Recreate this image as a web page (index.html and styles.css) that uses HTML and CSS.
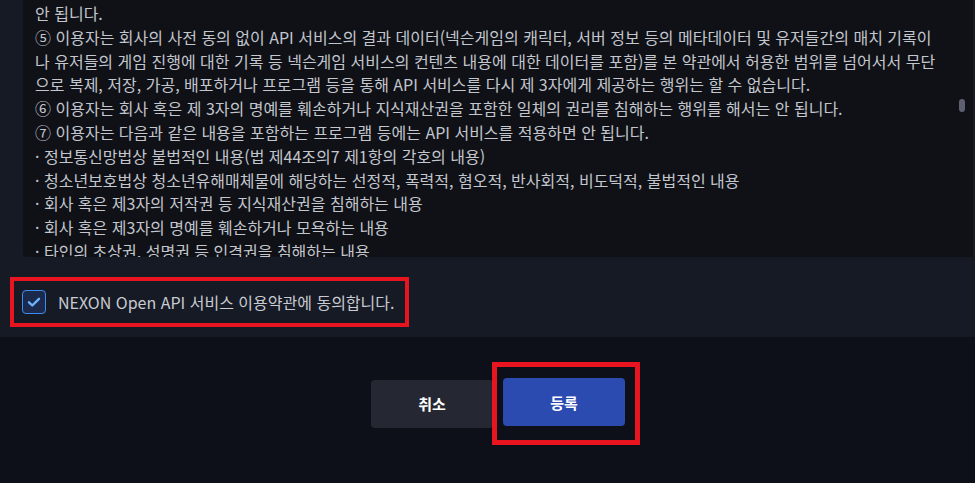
FILE: index.html
```html
<!DOCTYPE html>
<html lang="ko">
<head>
<meta charset="utf-8">
<link rel="stylesheet" href="styles.css">
</head>
<body>
<div class="modal">
  <div class="terms-wrap">
    <div class="terms">
      <p>안 됩니다.</p>
      <p>⑤ 이용자는 회사의 사전 동의 없이 API 서비스의 결과 데이터(넥슨게임의 캐릭터, 서버 정보 등의 메타데이터 및 유저들간의 매치 기록이나 유저들의 게임 진행에 대한 기록 등 넥슨게임 서비스의 컨텐츠 내용에 대한 데이터를 포함)를 본 약관에서 허용한 범위를 넘어서서 무단으로 복제, 저장, 가공, 배포하거나 프로그램 등을 통해 API 서비스를 다시 제 3자에게 제공하는 행위는 할 수 없습니다.</p>
      <p>⑥ 이용자는 회사 혹은 제 3자의 명예를 훼손하거나 지식재산권을 포함한 일체의 권리를 침해하는 행위를 해서는 안 됩니다.</p>
      <p>⑦ 이용자는 다음과 같은 내용을 포함하는 프로그램 등에는 API 서비스를 적용하면 안 됩니다.</p>
      <p>· 정보통신망법상 불법적인 내용(법 제44조의7 제1항의 각호의 내용)</p>
      <p>· 청소년보호법상 청소년유해매체물에 해당하는 선정적, 폭력적, 혐오적, 반사회적, 비도덕적, 불법적인 내용</p>
      <p>· 회사 혹은 제3자의 저작권 등 지식재산권을 침해하는 내용</p>
      <p>· 회사 혹은 제3자의 명예를 훼손하거나 모욕하는 내용</p>
      <p>· 타인의 초상권, 성명권 등 인격권을 침해하는 내용</p>
      <p>· 기타 관계 법령에 위배되는 내용</p>
    </div>
    <div class="thumb"></div>
  </div>
  <div class="agree">
    <label class="agree-box">
      <span class="check">
        <svg width="16" height="16" viewBox="0 0 16 16"><path d="M3 8.3l3.3 3.2L13 4.8" fill="none" stroke="#6cb2ff" stroke-width="2.4" stroke-linecap="round" stroke-linejoin="round"/></svg>
      </span>
      <span class="agree-text">NEXON Open API 서비스 이용약관에 동의합니다.</span>
    </label>
  </div>
  <div class="footer">
    <button class="btn cancel">취소</button>
    <div class="highlight"><button class="btn submit">등록</button></div>
  </div>
</div>
</body>
</html>
```

FILE: styles.css
```css
* { box-sizing: border-box; }
html, body { margin: 0; padding: 0; }
body {
  width: 975px;
  height: 483px;
  overflow: hidden;
  background: #0d1018;
  font-family: "Noto Sans CJK KR", "Noto Sans", sans-serif;
}
.modal { display: flex; flex-direction: column; }
.terms-wrap {
  background: #161a24;
  padding-left: 23px;
  padding-right: 2px;
  position: relative;
}
.terms {
  height: 257px;
  overflow: hidden;
  background: #0f1117;
  border-bottom-left-radius: 4px;
  padding: 2px 30px 0 12px;
  color: #c3c6cd;
  font-size: 16px;
  line-height: 23.8px;
}
.terms p { margin: 0; }
.thumb {
  position: absolute;
  left: 959px;
  top: 99px;
  width: 6px;
  height: 13px;
  border-radius: 3px;
  background: #5c6070;
}
.agree {
  background: #161a24;
  height: 80px;
  padding: 20px 0 0 10px;
}
.agree-box {
  display: inline-flex;
  align-items: center;
  width: 399px;
  height: 50px;
  border: 4px solid #e8141f;
  padding-left: 8px;
}
.check {
  width: 24px;
  height: 24px;
  border: 1px solid #3d8cf0;
  border-radius: 4px;
  background: #1b2a4c;
  display: flex;
  align-items: center;
  justify-content: center;
}
.agree-text {
  margin-left: 12px;
  color: #c8cbd3;
  font-size: 16px;
}
.footer {
  display: flex;
  align-items: center;
  padding: 25px 0 0 371px;
}
.btn {
  width: 122px;
  height: 48px;
  border: none;
  border-radius: 4px;
  color: #ffffff;
  font-family: "Noto Sans CJK KR", sans-serif;
  font-size: 15px;
  font-weight: 700;
}
.cancel { background: #252832; }
.highlight {
  border: 5px solid #e8141f;
  padding: 11px 10px 14px 6px;
  margin-left: -1px;
}
.submit { background: #2b4bb1; }
```
